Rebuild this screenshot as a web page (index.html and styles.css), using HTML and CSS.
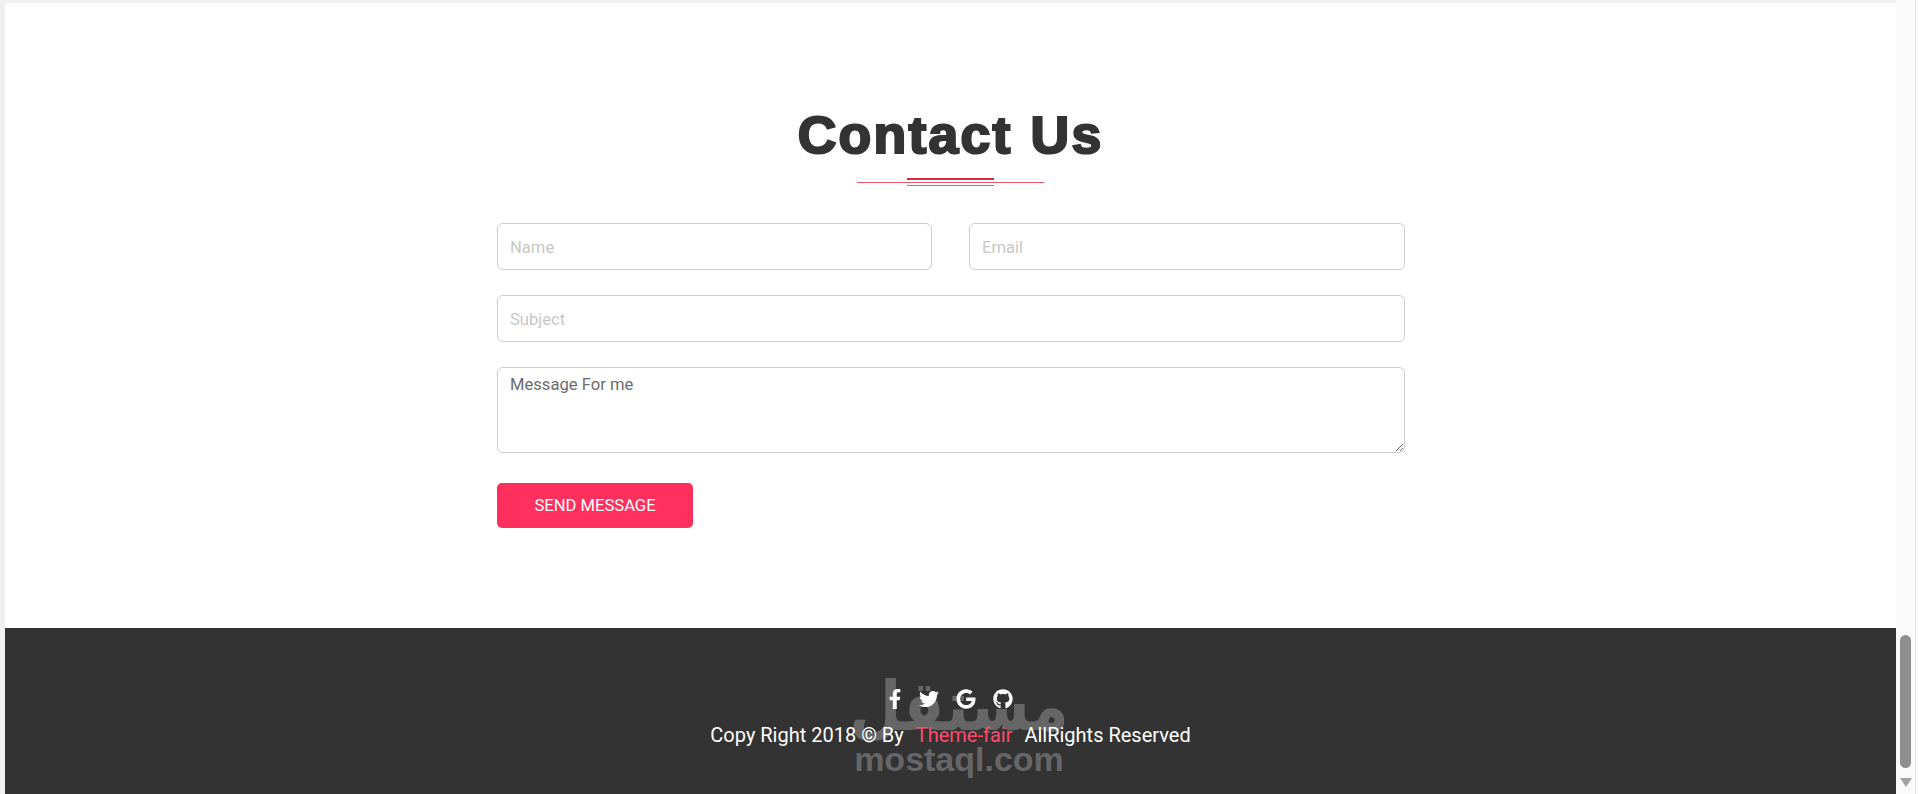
FILE: index.html
```html
<!DOCTYPE html>
<html lang="en">
<head>
<meta charset="utf-8">
<title>Contact Us</title>
<link rel="stylesheet" href="styles.css">
</head>
<body>
<div class="window">
  <div class="page">
    <section class="contact">
      <h1 class="title">Contact Us</h1>
      <div class="divider" aria-hidden="true">
        <span class="rule-top"></span>
        <span class="rule-long"></span>
        <span class="rule-bottom"></span>
      </div>
      <form class="form">
        <div class="row-two">
          <input class="field" type="text" placeholder="Name">
          <input class="field" type="text" placeholder="Email">
        </div>
        <input class="field" type="text" placeholder="Subject">
        <textarea class="field area" placeholder="Message For me"></textarea>
        <button class="send" type="button">SEND MESSAGE</button>
      </form>
    </section>
    <footer class="footer">
      <div class="socials">
        <svg class="icon icon-f" viewBox="0 0 320 512"><path d="M279.14 288l14.22-92.66h-88.91v-60.13c0-25.35 12.42-50.06 52.24-50.06h40.42V6.26S260.43 0 225.36 0c-73.22 0-121.08 44.38-121.08 124.72v70.62H22.89V288h81.39v224h100.17V288z"/></svg>
        <svg class="icon" viewBox="0 0 512 512"><path d="M459.37 151.716c.325 4.548.325 9.097.325 13.645 0 138.72-105.583 298.558-298.558 298.558-59.452 0-114.68-17.219-161.137-47.106 8.447.974 16.568 1.299 25.34 1.299 49.055 0 94.213-16.568 130.274-44.832-46.132-.975-84.792-31.188-98.112-72.772 6.498.974 12.995 1.624 19.818 1.624 9.421 0 18.843-1.3 27.614-3.573-48.081-9.747-84.143-51.98-84.143-102.985v-1.299c13.969 7.797 30.214 12.67 47.431 13.319-28.264-18.843-46.781-51.005-46.781-87.391 0-19.492 5.197-37.36 14.294-52.954 51.655 63.675 129.3 105.258 216.365 109.807-1.624-7.797-2.599-15.918-2.599-24.04 0-57.828 46.782-104.934 104.934-104.934 30.213 0 57.502 12.67 76.67 33.137 23.715-4.548 46.456-13.32 66.599-25.34-7.798 24.366-24.366 44.833-46.132 57.827 21.117-2.273 41.584-8.122 60.426-16.243-14.292 20.791-32.161 39.308-52.628 54.253z"/></svg>
        <svg class="icon" viewBox="0 0 488 512"><path d="M488 261.8C488 403.3 391.1 504 248 504 110.8 504 0 393.2 0 256S110.8 8 248 8c66.8 0 123 24.5 166.3 64.9l-67.5 64.9C258.5 52.6 94.3 116.6 94.3 256c0 86.5 69.1 156.6 153.7 156.6 98.2 0 135-70.4 140.8-106.9H248v-85.3h236.1c2.3 12.7 3.9 24.9 3.9 41.4z"/></svg>
        <svg class="icon" viewBox="0 0 496 512"><path d="M165.9 397.4c0 2-2.3 3.6-5.2 3.6-3.3 0-5.6-1.6-5.6-3.6 0-2 2.3-3.6 5.2-3.6 3-.3 5.6 1.3 5.6 3.6zm-31.1-4.5c-.7 2 1.3 4.3 4.3 4.9 2.6 1 5.6 0 6.2-2s-1.3-4.3-4.3-5.2c-2.6-.7-5.5.3-6.2 2.3zm44.2-1.7c-2.9.7-4.9 2.6-4.6 4.9.3 2 2.9 3.3 5.9 2.6 2.9-.7 4.9-2.6 4.6-4.6-.3-1.9-3-3.2-5.9-2.9zM244.8 8C106.1 8 0 113.3 0 252c0 110.9 69.8 205.8 169.5 239.2 12.8 2.3 17.3-5.6 17.3-12.1 0-6.2-.3-40.4-.3-61.4 0 0-70 15-84.7-29.8 0 0-11.4-29.1-27.8-36.6 0 0-22.9-15.7 1.6-16 0 0 24.9 2 38.6 25.8 21.9 38.6 58.6 27.5 72.9 20.9 2.3-16 8.8-27.1 16-33.7-55.9-6.2-112.3-14.3-112.3-110.5 0-27.5 7.6-41.3 23.6-58.9-2.6-6.5-11.1-33.3 2.6-67.9 20.9-6.5 69 27 69 27 20-5.6 41.5-8.5 62.8-8.5s42.8 2.9 62.8 8.5c0 0 48.1-33.6 69-27 13.7 34.7 5.2 61.4 2.6 67.9 16 17.7 25.8 31.5 25.8 58.9 0 96.5-58.9 104.2-114.8 110.5 9.2 7.9 17 22.9 17 46.4 0 33.7-.3 75.4-.3 83.6 0 6.5 4.6 14.4 17.3 12.1C428.2 457.8 496 362.9 496 252 496 113.3 383.5 8 244.8 8z"/></svg>
      </div>
      <p class="copy">Copy Right 2018 © By <a class="brand" href="#">Theme-fair</a> AllRights Reserved</p>
      <div class="watermark" aria-hidden="true">
        <span class="wm-ar" lang="ar" dir="rtl">مستقل</span>
        <span class="wm-en">mostaql.com</span>
      </div>
    </footer>
  </div>
  <div class="scrollbar" aria-hidden="true">
    <span class="thumb"></span>
    <span class="arrow"></span>
  </div>
</div>
</body>
</html>
```

FILE: styles.css
```css
* { box-sizing: border-box; }
html, body { margin: 0; height: 100%; overflow: hidden; background: #fff; }
body { font-family: Roboto, "Liberation Sans", sans-serif; }

.window { display: flex; height: 794px; width: 1919px; }

.page {
  width: 1896px;
  height: 794px;
  flex: none;
  display: flex;
  flex-direction: column;
  border-top: 3px solid #f1f1f1;
  border-left: 5px solid #f0f0f0;
  background: #fff;
}

.contact {
  height: 625px;
  flex: none;
  display: flex;
  flex-direction: column;
  align-items: center;
  padding-top: 103px;
}

.title {
  margin: 0;
  font-family: "Liberation Sans", Arial, sans-serif;
  font-weight: 700;
  font-size: 51px;
  line-height: 60px;
  color: #333;
  letter-spacing: 2.1px;
  word-spacing: 1px;
  -webkit-text-stroke: 2.2px #333;
  transform: scaleX(1.05);
}

.divider {
  margin-top: 12px;
  display: flex;
  flex-direction: column;
  align-items: center;
  gap: 2px;
}
.rule-top { width: 87px; height: 2px; background: #d9283f; }
.rule-long { width: 187px; height: 1px; background: #ee5a6c; }
.rule-bottom { width: 87px; height: 1px; background: #ee5a6c; }

.form {
  width: 908px;
  margin-top: 37px;
  margin-left: 1px;
  display: flex;
  flex-direction: column;
  gap: 25px;
  align-items: flex-start;
}
.row-two { width: 100%; display: grid; grid-template-columns: 435px 436px; column-gap: 37px; }

.field {
  width: 100%;
  height: 47px;
  padding: 1px 12px 0;
  border: 1px solid #ccc;
  border-radius: 6px;
  background: #fff;
  font-family: Roboto, sans-serif;
  font-size: 16.6px;
  color: #495057;
  outline: none;
}
.field::placeholder { color: #c8c8c4; opacity: 1; }
.area { height: 86px; padding: 5px 12px; display: block; line-height: 24px; }
.area::placeholder { color: #6c6c6c; }

.send {
  width: 196px;
  height: 45px;
  margin-top: 5px;
  border: 0;
  border-radius: 5px;
  background: #ff2f5e;
  color: #fff;
  font-family: Roboto, sans-serif;
  font-size: 16.6px;
}

.footer {
  position: relative;
  flex: 1;
  background: #333;
  display: flex;
  flex-direction: column;
  align-items: center;
  padding-top: 60px;
  overflow: hidden;
}
.socials { display: flex; align-items: center; gap: 17px; height: 21px; position: relative; z-index: 1; }
.icon { height: 20px; width: 20px; fill: #fff; display: block; }
.icon-f { width: 14px; }

.copy {
  margin: 13px 0 0;
  font-size: 20px;
  line-height: 27px;
  color: #fff;
  position: relative;
  z-index: 1;
}
.brand { color: #ff4a6e; text-decoration: none; margin: 0 7px; }

.watermark {
  position: absolute;
  left: 850px;
  top: 45px;
  width: 208px;
  display: flex;
  flex-direction: column;
  align-items: center;
  color: #666;
}
.wm-ar {
  font-family: "DejaVu Sans", sans-serif;
  font-weight: 700;
  font-size: 60px;
  line-height: 67px;
  height: 67px;
  transform: scaleY(1.15);
}
.wm-en { font-family: "Liberation Sans", sans-serif; font-weight: 700; font-size: 34px; line-height: 38px; letter-spacing: 0; }

.scrollbar {
  width: 20px;
  height: 794px;
  flex: none;
  background: #fafafa;
  border-right: 1px solid #e4e4e4;
  display: flex;
  flex-direction: column;
  align-items: center;
  padding-top: 635px;
}
.thumb { width: 11px; height: 133px; border-radius: 6px; background: #8f8f8f; }
.arrow {
  margin-top: 10px;
  width: 0;
  height: 0;
  border-left: 6px solid transparent;
  border-right: 6px solid transparent;
  border-top: 9px solid #a3a3a3;
}
```
